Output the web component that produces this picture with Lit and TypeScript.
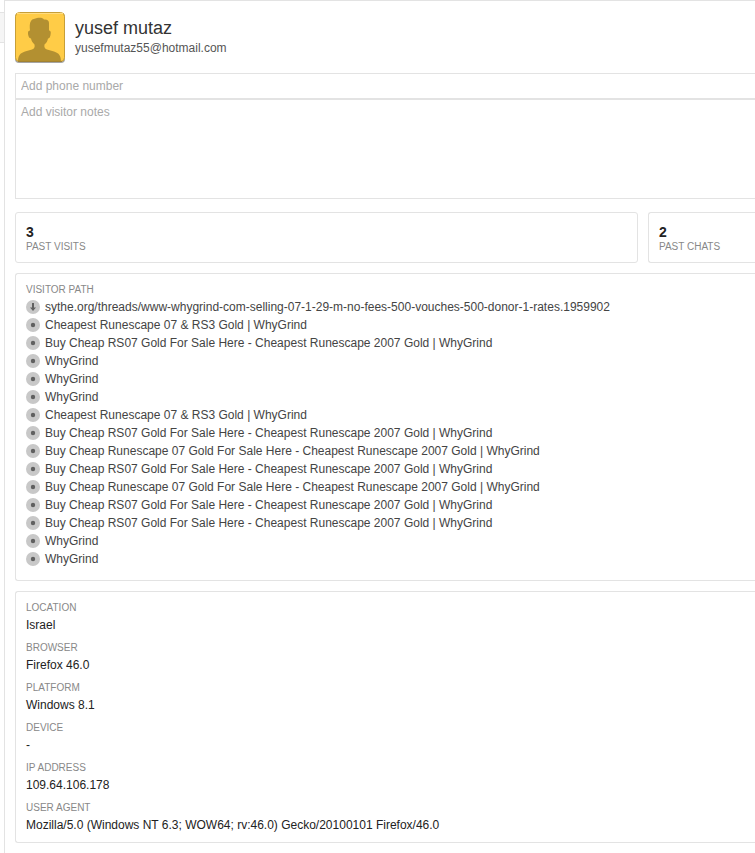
import { LitElement, html, css, svg } from "lit";
import { customElement } from "lit/decorators.js";

const HOME = "WhyGrind";
const CHEAPEST = "Cheapest Runescape 07 & RS3 Gold | WhyGrind";
const RS07 = "Buy Cheap RS07 Gold For Sale Here - Cheapest Runescape 2007 Gold | WhyGrind";
const RUNESCAPE07 = "Buy Cheap Runescape 07 Gold For Sale Here - Cheapest Runescape 2007 Gold | WhyGrind";

const visitorPath = [
  "sythe.org/threads/www-whygrind-com-selling-07-1-29-m-no-fees-500-vouches-500-donor-1-rates.1959902",
  CHEAPEST, RS07, HOME, HOME, HOME, CHEAPEST, RS07, RUNESCAPE07, RS07,
  RUNESCAPE07, RS07, RS07, HOME, HOME,
];

const details = [
  ["Location", "Israel"],
  ["Browser", "Firefox 46.0"],
  ["Platform", "Windows 8.1"],
  ["Device", "-"],
  ["IP address", "109.64.106.178"],
  ["User agent", "Mozilla/5.0 (Windows NT 6.3; WOW64; rv:46.0) Gecko/20100101 Firefox/46.0"],
];

const arrow = svg`<path d="M6 3h2v4.500h2L7 11 4 7.500h2z" fill="#606060"/>`;
const dot = svg`<circle cx="7" cy="7" r="2.200" fill="#606060"/>`;

@customElement("app-root")
export class AppRoot extends LitElement {
  static styles = css`
    :host {
      display: flex;
      min-height: 100vh;
      box-sizing: border-box;
      overflow: hidden;
      background: #fff;
      color: #222;
      font: 12px/18px "Liberation Sans", Arial, sans-serif;
    }
    * { box-sizing: border-box; }
    .rail { flex: 0 0 4px; padding-top: 12px; }
    .tab {
      height: 31px;
      background: #f5f5f5;
      border: solid #e3e3e3;
      border-width: 1px 0;
    }
    .panel {
      flex: 1;
      min-width: 0;
      padding: 11px 0 10px 10px;
      border-top: 1px solid #e3e3e3;
      border-left: 1px solid #e3e3e3;
    }
    .visitor { display: flex; gap: 10px; margin-bottom: 10px; }
    .avatar { display: block; width: 50px; height: 51px; }
    .identity { padding-top: 6px; }
    h1 { margin: 0; font-size: 18px; line-height: 21px; font-weight: 400; color: #333; }
    .email { margin: 0; color: #555; }
    .field {
      display: block;
      width: 100%;
      margin: 0;
      padding: 3px 5px;
      border: 1px solid #e3e3e3;
      border-right: 0;
      border-radius: 0;
      outline: 0;
      resize: none;
      background: #fff;
      font: inherit;
      color: #222;
    }
    .field::placeholder { color: #a9a9a9; opacity: 1; }
    .phone { height: 26px; }
    .notes { height: 100px; }
    .stats {
      display: grid;
      grid-template-columns: minmax(0, 1fr) 107px;
      gap: 10px;
      margin-top: 13px;
    }
    .card { border: 1px solid #e3e3e3; border-radius: 3px; padding: 10px; }
    .open { border-right: 0; border-radius: 3px 0 0 3px; }
    .stats .card { padding-bottom: 9px; }
    .count { margin: 0; font-size: 14px; font-weight: 700; }
    .label {
      margin: 0;
      font-size: 10px;
      line-height: 12px;
      font-weight: 400;
      color: #888;
      text-transform: uppercase;
    }
    .block { margin-top: 10px; }
    .path { list-style: none; margin: 2px 0; padding: 0; color: #444; }
    .path li { display: flex; align-items: center; gap: 5px; white-space: nowrap; }
    .step { flex: none; width: 14px; height: 14px; }
    .about { padding-bottom: 8px; }
    .details { margin: 0; display: grid; gap: 8px; }
    .details dd { margin: 2px 0 0; }
  `;

  render() {
    return html`
      <div class="rail"><div class="tab"></div></div>
      <main class="panel">
        <header class="visitor">
          <svg class="avatar" viewBox="0 0 50 51" aria-hidden="true">
            <rect y="1" width="50" height="50" rx="4" fill="#a5a5a5"/>
            <rect x=".5" y=".5" width="49" height="49" rx="4" fill="#ffcc47" stroke="#c79f38"/>
            <path d="M2 1.500h46" stroke="#ffdc80"/>
            <path d="M3 49.500C3 44 5 41 10 39.500L17 37.500C19.500 36.500 20 35 19.500 32.500C17.500 30.500 16.500 29 16 26.500C14 26.500 13 23.500 13 21C13 19.500 13.500 18.500 15 18.500C14.500 15 14.500 11 16 9C17.500 6.500 20 7 22 6C26 5.500 28 6 29 7.500C32 7 34 8.500 34 11V18.500C35.500 18.500 36 20 35.700 21.500C35.500 24.500 34.500 26.500 33 26.500C32.500 29 31.500 31 29.500 32.500C29 35 29.500 36.500 32 37.500L39 39.500C44 41 46 44 46 49.500Z" fill="#b39031"/>
            <path d="M3 49.500h44" stroke="#a28232"/>
          </svg>
          <div class="identity">
            <h1>yusef mutaz</h1>
            <p class="email">yusefmutaz55@hotmail.com</p>
          </div>
        </header>

        <input class="field phone" type="tel" aria-label="Phone number" placeholder="Add phone number" />
        <textarea class="field notes" aria-label="Visitor notes" placeholder="Add visitor notes"></textarea>

        <section class="stats">
          <div class="card">
            <p class="count">3</p>
            <p class="label">Past visits</p>
          </div>
          <div class="card open">
            <p class="count">2</p>
            <p class="label">Past chats</p>
          </div>
        </section>

        <section class="card open block">
          <h2 class="label">Visitor path</h2>
          <ol class="path">
            ${visitorPath.map((title, i) => html`
              <li>
                <svg class="step" viewBox="0 0 14 14" aria-hidden="true">
                  <circle cx="7" cy="7" r="7" fill="#c8c8c8"/>${i === 0 ? arrow : dot}
                </svg>
                <span>${title}</span>
              </li>`)}
          </ol>
        </section>

        <section class="card open block about">
          <dl class="details">
            ${details.map(([name, value]) => html`
              <div><dt class="label">${name}</dt><dd>${value}</dd></div>`)}
          </dl>
        </section>
      </main>
    `;
  }
}
